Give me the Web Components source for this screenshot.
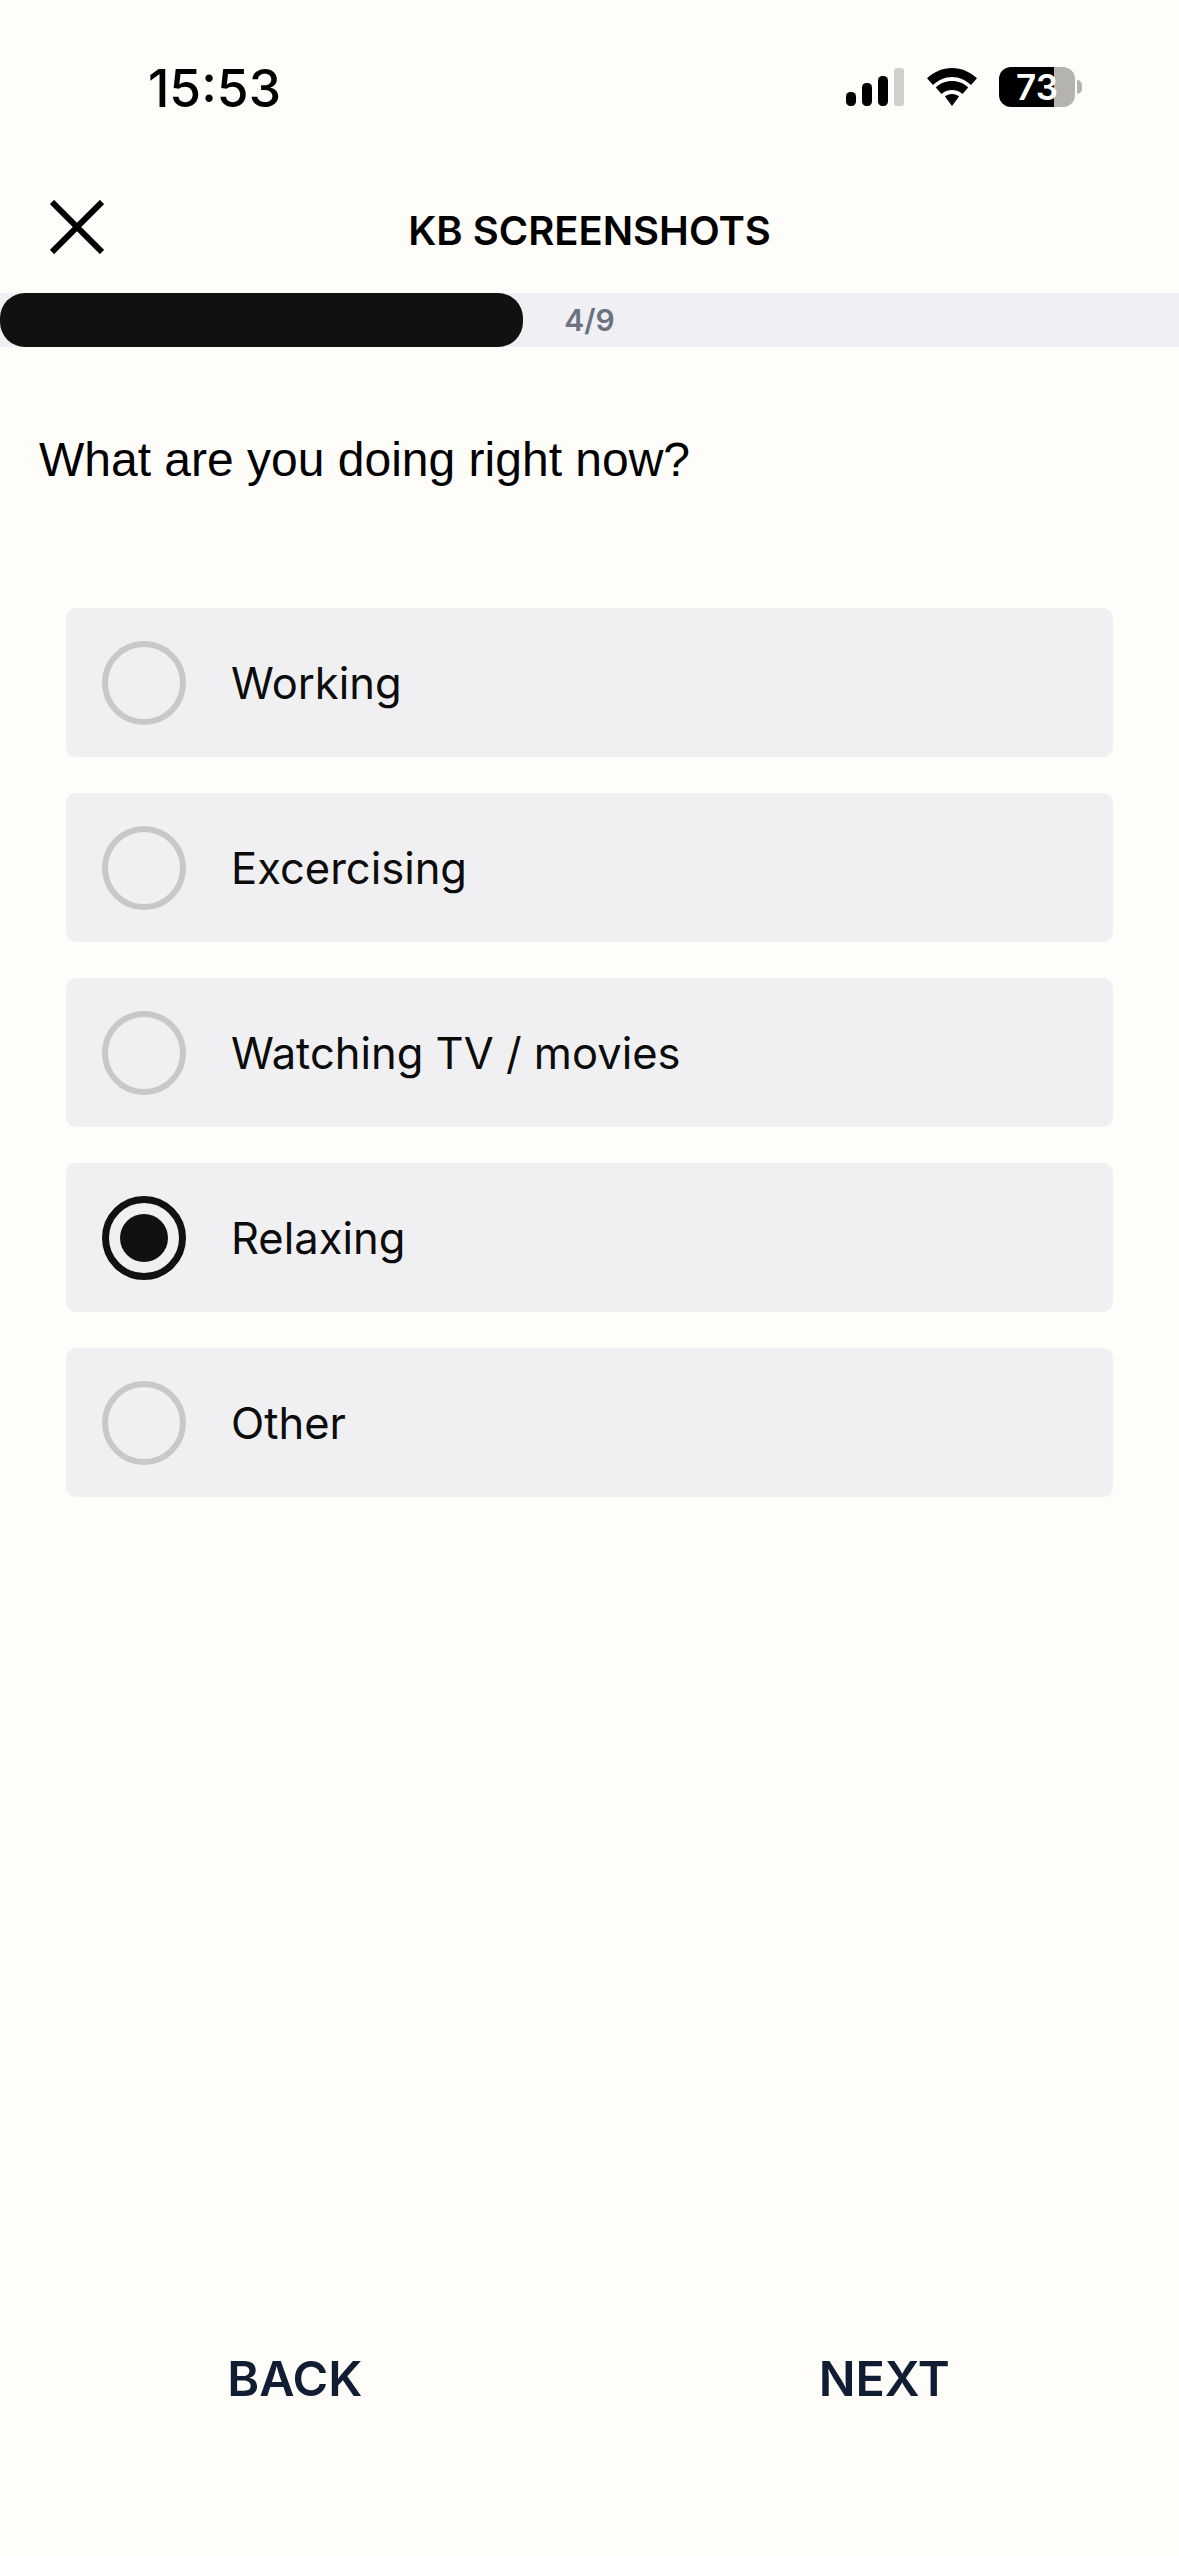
<!DOCTYPE html>
<html lang="en"><head><meta charset="utf-8"><title>KB Screenshots</title>
<style>
html,body{margin:0;padding:0;background:#fffdfa}
body{width:1179px;height:2556px;overflow:hidden}
</style></head><body>
<survey-screen>
  <status-bar slot="status"></status-bar>
  <survey-header slot="header" title="KB SCREENSHOTS"></survey-header>
  <survey-progress slot="progress" value="4" max="9"></survey-progress>
  <survey-question slot="question">What are you doing right now?</survey-question>
  <survey-option>Working</survey-option>
  <survey-option>Excercising</survey-option>
  <survey-option>Watching TV / movies</survey-option>
  <survey-option selected>Relaxing</survey-option>
  <survey-option>Other</survey-option>
  <survey-nav slot="nav"></survey-nav>
</survey-screen>
<script>
function def(name, html){
  customElements.define(name, class extends HTMLElement{
    connectedCallback(){
      if(this.shadowRoot) return;
      const r=this.attachShadow({mode:'open'});
      r.innerHTML=typeof html==='function'?html(this):html;
    }
  });
}
def('survey-screen',`<style>
:host{display:flex;flex-direction:column;width:1179px;height:2556px;background:#fffdfa;color:#000}
.opts{display:flex;flex-direction:column;gap:36px;padding:0 66px}
.sp{flex:1}
</style>
<slot name="status"></slot><slot name="header"></slot><slot name="progress"></slot><slot name="question"></slot>
<div class="opts"><slot></slot></div><div class="sp"></div><slot name="nav"></slot>`);
def('status-bar',`<style>
:host{display:flex;box-sizing:border-box;height:175px;padding:61px 97px 0 148px;justify-content:space-between;align-items:flex-start}
.t{font:550 51.500px/54px Inter,"Liberation Sans",sans-serif;color:#000}
.r{display:flex;align-items:center;height:54px;margin-top:-1px}
svg{display:block}
.b{box-sizing:border-box;width:76px;height:40px;margin-left:22px;border-radius:12px;background:linear-gradient(90deg,#000 0 55px,#b4b3af 55px);color:#fff;font:600 35px/40px Inter,"Liberation Sans",sans-serif;text-align:center}
.n{width:5px;height:14px;margin-left:2px;background:#b4b3af;border-radius:0 5px 5px 0}
</style>
<span class="t">15:53</span>
<div class="r">
<svg width="58" height="38" viewBox="0 0 58 38"><rect x="0" y="24" width="10" height="14" rx="4.500" fill="#000"/><rect x="16" y="15" width="10" height="23" rx="4.500" fill="#000"/><rect x="32" y="8" width="10" height="30" rx="4.500" fill="#000"/><rect x="48" y="0" width="10" height="38" rx="3" fill="#cfcfcb"/></svg>
<svg style="margin-left:23px" width="50" height="38" viewBox="0 0 50 38"><path d="M25 0C15.500 0 7 3.700 0 10.300L6 17C11.500 12 17.500 9 25 9S38.500 12 44 17L50 10.300C43 3.700 34.500 0 25 0Z" fill="#000"/><path d="M25 13C18.500 13 13 15.300 8.800 19.600L14.500 26C17.500 23.500 21 22 25 22S32.500 23.500 35.500 26L41.200 19.600C37 15.300 31.500 13 25 13Z" fill="#000"/><path d="M25 26C22 26 19.700 27 18 28.500L25 38L32 28.500C30.300 27 28 26 25 26Z" fill="#000"/></svg>
<div class="b">73</div><div class="n"></div>
</div>`);
def('survey-header',h=>`<style>
:host{display:grid;grid-template-columns:1fr auto 1fr;align-items:center;height:118px;box-sizing:border-box}
svg{display:block;margin:-14px 0 0 50px}
.t{font:600 40px/50px "Inter","Liberation Sans",sans-serif;color:#000;margin-top:-7px}
</style>
<svg width="54" height="54" viewBox="0 0 54 54"><path d="M2 2L52 52M52 2L2 52" stroke="#000" stroke-width="6" fill="none"/></svg>
<span class="t">${h.getAttribute('title')}</span><span></span>`);
def('survey-progress',h=>{const v=+h.getAttribute('value'),m=+h.getAttribute('max');return `<style>
:host{display:block;height:54px;background:#f0f0f4}
.w{position:relative;height:100%;display:flex;align-items:center;justify-content:center}
.f{position:absolute;left:0;top:0;bottom:0;width:523px;background:#111110;border-radius:25px}
.l{font:600 30px/54px "Inter","Liberation Sans",sans-serif;color:#6b7280}
</style><div class="w"><div class="f"></div><span class="l">${v}/${m}</span></div>`});
def('survey-question',`<style>
:host{display:block;padding:85px 39px 0;box-sizing:border-box;margin-bottom:88px;height:173px;font:400 48px/56px "Liberation Sans",Arial,sans-serif;color:#000}
</style><slot></slot>`);
customElements.define('survey-option',class extends HTMLElement{
  connectedCallback(){
    if(this.shadowRoot) return;
    const r=this.attachShadow({mode:'open'});
    r.innerHTML=`<style>
:host{display:flex;align-items:center;box-sizing:border-box;height:149px;padding-left:36px;gap:45px;background:#f0f0f3;border-radius:10px;font:400 43.500px/56px "Inter","Liberation Sans",sans-serif;color:#0c0c0c}
.c{box-sizing:border-box;width:84px;height:84px;border-radius:50%;border:6px solid #c6c8ca;display:flex;align-items:center;justify-content:center;flex:none}
:host([selected]) .c{border:7px solid #111}
:host([selected]) .c::after{content:"";width:48px;height:48px;border-radius:50%;background:#111}
</style><span class="c"></span><span><slot></slot></span>`;
  }
});
def('survey-nav',`<style>
:host{display:grid;grid-template-columns:1fr 1fr;height:90px;margin-bottom:132px;align-items:center;text-align:center;font:600 48.500px/90px "Inter","Liberation Sans",sans-serif;color:#111d33}
</style><span>BACK</span><span>NEXT</span>`);
</script>
</body></html>
